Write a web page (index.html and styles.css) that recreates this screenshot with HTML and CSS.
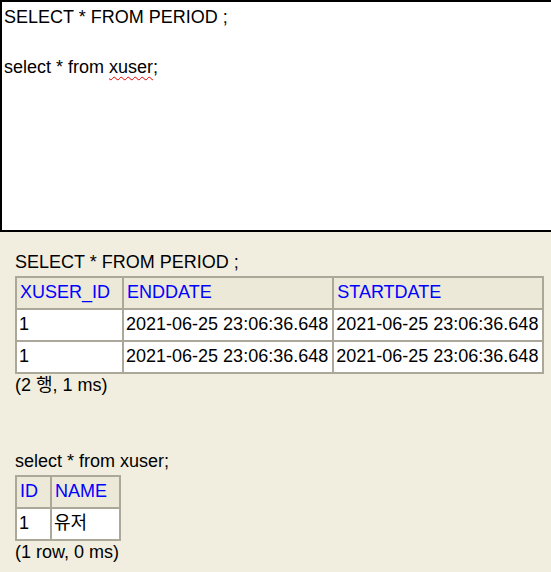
FILE: index.html
```html
<!DOCTYPE html>
<html>
<head>
<meta charset="utf-8">
<link rel="stylesheet" href="styles.css">
</head>
<body>
<div class="editor"><div class="line">SELECT * FROM PERIOD ;</div><div class="line">&nbsp;</div><div class="line">select * from <span class="typo">xuser</span>;</div></div>
<div class="result">
  <div class="query">SELECT * FROM PERIOD ;</div>
  <table class="rs">
    <tr><th>XUSER_ID</th><th>ENDDATE</th><th>STARTDATE</th></tr>
    <tr><td>1</td><td>2021-06-25 23:06:36.648</td><td>2021-06-25 23:06:36.648</td></tr>
    <tr><td>1</td><td>2021-06-25 23:06:36.648</td><td>2021-06-25 23:06:36.648</td></tr>
  </table>
  <div class="info">(2 행, 1 ms)</div>
  <div class="query second">select * from xuser;</div>
  <table class="rs">
    <tr><th>ID</th><th>NAME</th></tr>
    <tr><td>1</td><td>유저</td></tr>
  </table>
  <div class="info">(1 row, 0 ms)</div>
</div>
</body>
</html>
```
FILE: styles.css
```css
html, body {
  margin: 0;
  padding: 0;
}
body {
  background: #f1eedf;
  font-family: "Liberation Sans", Arial, "Noto Sans CJK KR", sans-serif;
  font-size: 18px;
  color: #000;
  overflow: hidden;
}
.editor {
  box-sizing: border-box;
  width: 580px;
  height: 232px;
  border: 2px solid #000;
  background: #fff;
  padding: 3px 2px 2px;
  line-height: 25px;
  white-space: pre;
}
.typo {
  text-decoration: underline wavy #e00000;
  text-decoration-thickness: 1px;
  text-underline-offset: 3px;
}
.result {
  padding: 20px 15px 0;
  line-height: 21px;
}
.query {
  height: 21px;
}
.second {
  margin-top: 55px;
}
.rs {
  border-collapse: collapse;
  border: 2px solid #aca899;
  margin-top: 3px;
}
.rs th, .rs td {
  border: 2px solid #aca899;
  line-height: 21px;
  padding: 4px 4px 5px 2px;
  text-align: left;
  vertical-align: top;
  white-space: nowrap;
  font-weight: normal;
}
.rs th {
  background: #ece9d8;
  color: #0000ff;
  padding-left: 3px;
  padding-right: 12px;
}
.rs td {
  background: #fff;
}
.info {
  height: 21px;
  margin-top: 1px;
}
```
